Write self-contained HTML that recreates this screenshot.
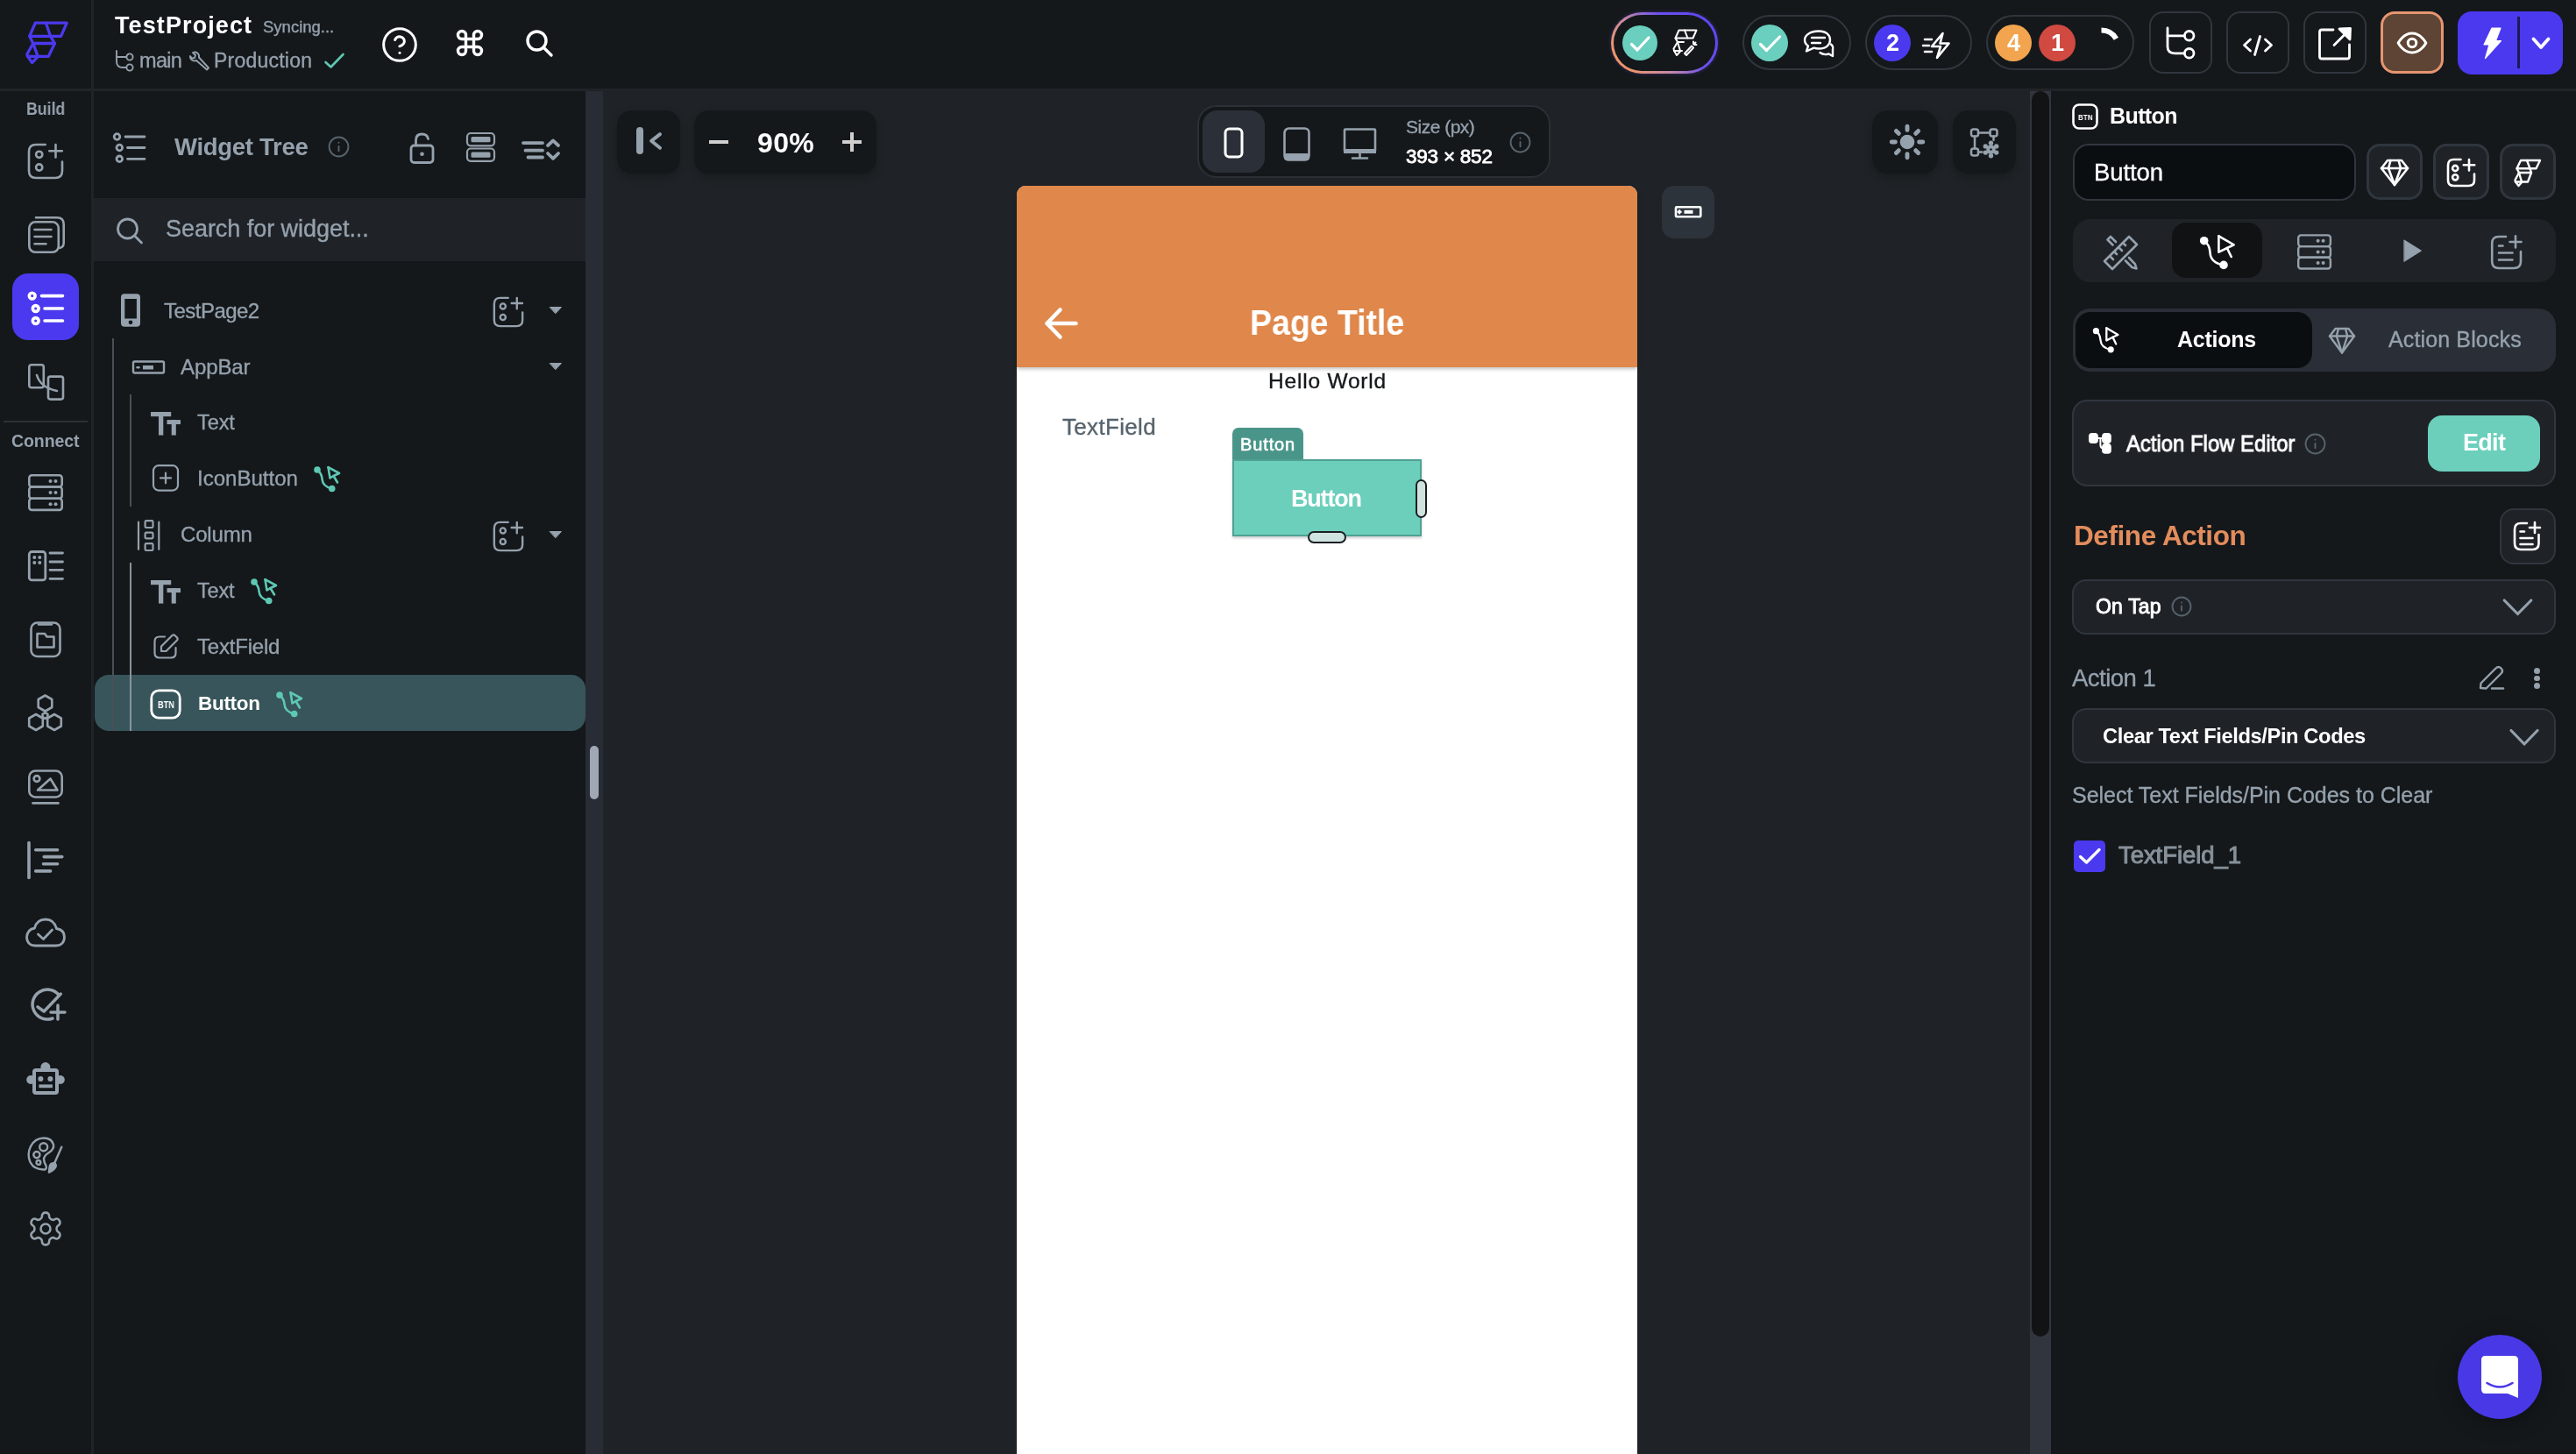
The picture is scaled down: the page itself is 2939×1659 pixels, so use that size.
<!DOCTYPE html>
<html><head><meta charset="utf-8"><title>FlutterFlow</title>
<style>
html,body{margin:0;padding:0}
body{width:2939px;height:1659px;overflow:hidden;position:relative;background:#14181b;font-family:"Liberation Sans",sans-serif}
.a{position:absolute}
.t{position:absolute;white-space:nowrap;line-height:1;will-change:transform}
svg.a{overflow:visible}
</style></head><body>
<div class="a" style="left:104px;top:0px;width:3px;height:1659px;background:#202428;"></div>
<div class="a" style="left:0px;top:101px;width:2939px;height:3px;background:#202428;"></div>
<div class="a" style="left:668px;top:104px;width:20px;height:1555px;background:#282c35;"></div>
<div class="a" style="left:673px;top:851px;width:10px;height:61px;background:#a0a8b5;border-radius:5px;"></div>
<div class="a" style="left:688px;top:104px;width:1628px;height:1555px;background:#1f2327;"></div>
<div class="a" style="left:2316px;top:104px;width:24px;height:1555px;background:#30353e;"></div>
<div class="a" style="left:2318px;top:104px;width:20px;height:1421px;background:#121315;border-radius:10px;"></div>
<svg class="a" style="left:25px;top:20px;" width="60" height="60" viewBox="0 0 60 60" fill="none" stroke="#4b39ef" stroke-width="3.3" stroke-linecap="round" stroke-linejoin="round"><path d="M15.3 6.2H51.2L44.6 21.3H8.7Z"/><path d="M27.4 6.2L32.6 21.3"/><path d="M8.7 21.3L12.8 29.5H37.4L32.6 21.3"/><path d="M12.8 29.5L5.8 42L6.6 44.4H30.3L37.4 29.5"/><path d="M12.8 29.5L18.2 44.4"/><path d="M6.6 44.4L11.6 51.6L18.4 44.4"/></svg>
<div class="t" style="left:131.00px;top:15.94px;font-size:27px;color:#ffffff;font-weight:700;letter-spacing:1.100px;">TestProject</div>
<div class="t" style="left:300.00px;top:22.34px;font-size:18.5px;color:#95a1ac;letter-spacing:0.000px;-webkit-text-stroke:0.35px #95a1ac;">Syncing...</div>
<svg class="a" style="left:130px;top:56px;" width="25" height="26" viewBox="0 0 25 26" fill="none" stroke="#95a1ac" stroke-width="1.9" stroke-linecap="round" stroke-linejoin="round"><path d="M3 2V14Q3 21 10 21H14"/><path d="M3 9H14"/><circle cx="18" cy="9" r="3.6"/><circle cx="18" cy="21" r="3.6"/></svg>
<div class="t" style="left:159.00px;top:57.91px;font-size:23.5px;color:#95a1ac;letter-spacing:-0.667px;-webkit-text-stroke:0.35px #95a1ac;">main</div>
<svg class="a" style="left:215px;top:57px;" width="25" height="24" viewBox="0 0 25 24" fill="none" stroke="#95a1ac" stroke-width="1.9" stroke-linecap="round" stroke-linejoin="round"><path d="M9 12L21 22.5L23 20.5L12 8.5"/><path d="M12 8.5A5 5 0 0 0 5 3L8 6L7 9L4 9.5L2 7A5 5 0 0 0 9 12"/></svg>
<div class="t" style="left:244.00px;top:58.33px;font-size:23px;color:#95a1ac;letter-spacing:0.222px;-webkit-text-stroke:0.35px #95a1ac;">Production</div>
<svg class="a" style="left:369px;top:59px;" width="25" height="21" viewBox="0 0 25 21" fill="none" stroke="#5ec8b3" stroke-width="2.6" stroke-linecap="round" stroke-linejoin="round"><path d="M2.5 12L8.5 17.5L22.5 3"/></svg>
<svg class="a" style="left:433.50px;top:28.50px;" width="44" height="44" viewBox="0 0 24 24" fill="none" stroke="#ffffff" stroke-width="1.636" stroke-linecap="round" stroke-linejoin="round"><circle cx="12" cy="12" r="10"/><path d="M9.09 9a3 3 0 0 1 5.83 1c0 2-3 3-3 3"/><path d="M12 17h.01"/></svg>
<svg class="a" style="left:517.50px;top:31.00px;" width="36" height="36" viewBox="0 0 24 24" fill="none" stroke="#ffffff" stroke-width="2.267" stroke-linecap="round" stroke-linejoin="round"><path d="M15 6v12a3 3 0 1 0 3-3H6a3 3 0 1 0 3 3V6a3 3 0 1 0-3 3h12a3 3 0 1 0-3-3"/></svg>
<svg class="a" style="left:597px;top:31px;" width="37" height="36" viewBox="0 0 37 36" fill="none" stroke="#ffffff" stroke-width="3.4" stroke-linecap="round" stroke-linejoin="round"><circle cx="15.5" cy="15.5" r="10.5"/><path d="M23 23L32 32"/></svg>
<div class="t" style="left:29.50px;top:115.49px;font-size:19.5px;color:#95a1ac;font-weight:700;transform:scaleX(0.9081632653061225);transform-origin:0 0;">Build</div>
<svg class="a" style="left:32px;top:164px;" width="40" height="40" viewBox="0 0 40 40" fill="none" stroke="#95a1ac" stroke-width="2.6" stroke-linecap="round" stroke-linejoin="round"><path d="M19.7 1H9Q1 1 1 9V31Q1 39 9 39H31Q39 39 39 31V20.5"/><path d="M31.5 1V15.5M24.3 8.2H38.8"/><circle cx="12.7" cy="12.3" r="3.6"/><circle cx="12.7" cy="27" r="3.6"/></svg>
<svg class="a" style="left:32px;top:247px;" width="42" height="42" viewBox="0 0 42 42" fill="none" stroke="#95a1ac" stroke-width="2.6" stroke-linecap="round" stroke-linejoin="round"><rect x="1.3" y="6.3" width="33.5" height="34.5" rx="7"/><path d="M9 1.3H33Q40.7 1.3 40.7 9V30Q40.7 35 36 36"/><path d="M7.5 15H26.5M7.5 23H26.5M7.5 31.3H20.5"/></svg>
<div class="a" style="left:14px;top:312px;width:76px;height:76px;background:#4b39ef;border-radius:18px;"></div>
<svg class="a" style="left:28px;top:328px;" width="48" height="44" viewBox="0 0 48 44" fill="none" stroke="#ffffff" stroke-width="3.6" stroke-linecap="round" stroke-linejoin="round"><circle cx="8.7" cy="9.6" r="3.4"/><circle cx="12.7" cy="24" r="3.4"/><circle cx="12.7" cy="38" r="3.4"/><path d="M19.5 9.6H43.5M23 24H43.5M23 38H43.5"/></svg>
<svg class="a" style="left:32px;top:415px;" width="42" height="42" viewBox="0 0 42 42" fill="none" stroke="#95a1ac" stroke-width="2.6" stroke-linecap="round" stroke-linejoin="round"><rect x="1.3" y="1.3" width="16.5" height="26" rx="2.5"/><rect x="23" y="14.6" width="17" height="26" rx="2.5"/><path d="M10 13Q14 27 33 31"/></svg>
<div class="a" style="left:4px;top:480px;width:96px;height:2px;background:#2b3036;"></div>
<div class="t" style="left:13.00px;top:493.69px;font-size:19.5px;color:#95a1ac;font-weight:700;letter-spacing:-0.067px;">Connect</div>
<svg class="a" style="left:32px;top:541px;" width="40" height="42" viewBox="0 0 40 42" fill="none" stroke="#95a1ac" stroke-width="2.6" stroke-linecap="round" stroke-linejoin="round"><rect x="1.3" y="1.3" width="37.4" height="13.2" rx="3"/><rect x="1.3" y="14.5" width="37.4" height="13.2" rx="3"/><rect x="1.3" y="27.7" width="37.4" height="13.2" rx="3"/><g fill="#95a1ac" stroke="none"><circle cx="25.5" cy="8" r="2"/><circle cx="31.5" cy="8" r="2"/><circle cx="25.5" cy="21" r="2"/><circle cx="31.5" cy="21" r="2"/><circle cx="25.5" cy="34.3" r="2"/><circle cx="31.5" cy="34.3" r="2"/></g></svg>
<svg class="a" style="left:32px;top:628px;" width="42" height="36" viewBox="0 0 42 36" fill="none" stroke="#95a1ac" stroke-width="2.8" stroke-linecap="round" stroke-linejoin="round"><rect x="1.3" y="1.5" width="18.5" height="32.4" rx="3"/><path d="M25 3H39.5M25 13H39.5M25 22.3H39.5M25 32.3H39.5"/><g fill="#95a1ac" stroke="none"><circle cx="7.3" cy="8" r="2"/><circle cx="13.3" cy="8" r="2"/><circle cx="7.3" cy="14" r="2"/><circle cx="13.3" cy="14" r="2"/></g></svg>
<svg class="a" style="left:34px;top:709px;" width="36" height="42" viewBox="0 0 36 42" fill="none" stroke="#95a1ac" stroke-width="2.6" stroke-linecap="round" stroke-linejoin="round"><rect x="1.5" y="1.5" width="33" height="38.5" rx="7"/><path d="M10 3.5H25"/><path d="M8.5 14H17L19.5 17.5H27.5V29.5H8.5Z"/></svg>
<svg class="a" style="left:30px;top:792px;" width="44" height="44" viewBox="0 0 44 44" fill="none" stroke="#95a1ac" stroke-width="2.6" stroke-linecap="round" stroke-linejoin="round"><path d="M21.50 19.50L13.71 15.00L13.71 6.00L21.50 1.50L29.29 6.00L29.29 15.00Z"/><path d="M11.00 41.00L3.21 36.50L3.21 27.50L11.00 23.00L18.79 27.50L18.79 36.50Z"/><path d="M32.00 41.00L24.21 36.50L24.21 27.50L32.00 23.00L39.79 27.50L39.79 36.50Z"/><path d="M21.50 27.90L18.56 26.20L18.56 22.80L21.50 21.10L24.44 22.80L24.44 26.20Z"/></svg>
<svg class="a" style="left:30px;top:877px;" width="44" height="43" viewBox="0 0 44 43" fill="none" stroke="#95a1ac" stroke-width="2.6" stroke-linecap="round" stroke-linejoin="round"><rect x="3.3" y="2.5" width="37.4" height="30" rx="7"/><circle cx="12" cy="11.5" r="3.4"/><path d="M13 24.5L27.5 11.5L35.5 24.5Z"/><path d="M7.5 39.4H36.5"/></svg>
<svg class="a" style="left:30px;top:959px;" width="44" height="45" viewBox="0 0 44 45" fill="none" stroke="#95a1ac" stroke-width="3.6" stroke-linecap="round" stroke-linejoin="round"><path d="M3 2.5V42.5"/><path d="M10.7 10.7H35.6M20.2 18.6H40.8M19.5 26.7H35.6M10.7 34.9H27.6"/></svg>
<svg class="a" style="left:28px;top:1046px;" width="48" height="36" viewBox="0 0 48 36" fill="none" stroke="#95a1ac" stroke-width="2.8" stroke-linecap="round" stroke-linejoin="round"><path d="M13 33H35Q45 33 45.5 23.5Q45.5 15 36.5 13.5Q33.5 3 24 3Q14 3 11.5 13Q3 14.5 2.5 23.5Q3 33 13 33Z"/><path d="M15.5 20L21.5 25.5L31.5 15"/></svg>
<svg class="a" style="left:30px;top:1127px;" width="46" height="42" viewBox="0 0 46 42" fill="none" stroke="#95a1ac" stroke-width="3.5" stroke-linecap="round" stroke-linejoin="round"><path d="M37 8A17 17 0 1 0 30 35"/><path d="M13 21.8L20.2 27L39.3 7"/><path d="M36 20V36M28 28H44"/></svg>
<svg class="a" style="left:30px;top:1210px;" width="44" height="42" viewBox="0 0 44 42" fill="none" stroke="#95a1ac" stroke-width="2" stroke-linecap="round" stroke-linejoin="round"><g fill="#95a1ac" stroke="none"><circle cx="21.9" cy="7.6" r="5.5"/><circle cx="5.2" cy="22" r="5"/><circle cx="38.8" cy="22" r="5"/><rect x="7" y="9" width="30" height="30" rx="4"/></g><rect x="11" y="13" width="22" height="22" fill="#14181b" stroke="none"/><g fill="#95a1ac" stroke="none"><circle cx="16.4" cy="21" r="3"/><circle cx="27.4" cy="21" r="3"/><rect x="14.4" y="27.4" width="15.5" height="3.8"/></g></svg>
<svg class="a" style="left:30px;top:1296px;" width="46" height="44" viewBox="0 0 46 44" fill="none" stroke="#95a1ac" stroke-width="2.4" stroke-linecap="round" stroke-linejoin="round"><path d="M21 38.5Q9 39 4.5 30Q0.5 21 5 12Q10 2.5 20 2.5Q29 2.5 31 10Q32 15 26 19Q20 22.5 20 27Q20.5 31 22.5 34Q23.5 38 21 38.5Z"/><circle cx="19.7" cy="12.7" r="4.5"/><circle cx="11.9" cy="21.6" r="3.6"/><circle cx="13.9" cy="30.4" r="2.4"/><path d="M40.3 12.7L32 31.5"/><path d="M31.9 31Q27 31 26.5 36L25.9 41.6Q31 40 33.5 35.5Q34.5 32.5 31.9 31Z" fill="#95a1ac"/></svg>
<svg class="a" style="left:30.00px;top:1379.50px;" width="44" height="44" viewBox="0 0 24 24" fill="none" stroke="#95a1ac" stroke-width="1.418" stroke-linecap="round" stroke-linejoin="round"><path d="M12.22 2h-.44a2 2 0 0 0-2 2v.18a2 2 0 0 1-1 1.73l-.43.25a2 2 0 0 1-2 0l-.15-.08a2 2 0 0 0-2.73.73l-.22.38a2 2 0 0 0 .73 2.73l.15.1a2 2 0 0 1 1 1.72v.51a2 2 0 0 1-1 1.74l-.15.09a2 2 0 0 0-.73 2.73l.22.38a2 2 0 0 0 2.73.73l.15-.08a2 2 0 0 1 2 0l.43.25a2 2 0 0 1 1 1.73V20a2 2 0 0 0 2 2h.44a2 2 0 0 0 2-2v-.18a2 2 0 0 1 1-1.73l.43-.25a2 2 0 0 1 2 0l.15.08a2 2 0 0 0 2.73-.73l.22-.39a2 2 0 0 0-.73-2.73l-.15-.08a2 2 0 0 1-1-1.74v-.5a2 2 0 0 1 1-1.74l.15-.09a2 2 0 0 0 .73-2.73l-.22-.38a2 2 0 0 0-2.73-.73l-.15.08a2 2 0 0 1-2 0l-.43-.25a2 2 0 0 1-1-1.73V4a2 2 0 0 0-2-2z"/><circle cx="12" cy="12" r="3"/></svg>
<svg class="a" style="left:128px;top:150px;" width="40" height="40" viewBox="0 0 40 40" fill="none" stroke="#95a1ac" stroke-width="2.8" stroke-linecap="round" stroke-linejoin="round"><circle cx="5.5" cy="6" r="3.3"/><circle cx="8.3" cy="18.5" r="3.3"/><circle cx="8.3" cy="31.3" r="3.3"/><path d="M15 6H37M17.5 18.5H37M17.5 31.3H37"/></svg>
<div class="t" style="left:198.50px;top:154.02px;font-size:27.5px;color:#95a1ac;font-weight:700;letter-spacing:-0.290px;">Widget Tree</div>
<svg class="a" style="left:373.90px;top:155.30px;" width="25" height="25" viewBox="0 0 24 24" fill="none" stroke="#57636c" stroke-width="1.824" stroke-linecap="round" stroke-linejoin="round"><circle cx="12" cy="12" r="10.5"/><path d="M12 16.5v-5"/><path d="M12 7.5h.01"/></svg>
<svg class="a" style="left:466px;top:150px;" width="31" height="38" viewBox="0 0 31 38" fill="none" stroke="#95a1ac" stroke-width="2.8" stroke-linecap="round" stroke-linejoin="round"><rect x="3" y="16" width="25" height="19.5" rx="3.5"/><path d="M8.5 16V10Q8.5 3 15.5 3Q21.5 3 22.5 8.5"/><circle cx="15.5" cy="25.7" r="2.3" fill="#95a1ac" stroke="none"/></svg>
<svg class="a" style="left:530px;top:149px;" width="37" height="37" viewBox="0 0 37 37" fill="none" stroke="#95a1ac" stroke-width="2.2" stroke-linecap="round" stroke-linejoin="round"><rect x="3" y="3" width="31" height="14.3" rx="4"/><rect x="3" y="20.5" width="31" height="14.3" rx="4"/><g fill="#95a1ac" stroke="none"><rect x="7.5" y="7" width="22" height="6.3" rx="1.5"/><rect x="7.5" y="24.5" width="22" height="6.3" rx="1.5"/></g></svg>
<svg class="a" style="left:593px;top:155px;" width="47" height="31" viewBox="0 0 47 31" fill="none" stroke="#95a1ac" stroke-width="3.8" stroke-linecap="round" stroke-linejoin="round"><path d="M4 8.1H26M6.5 16.7H26M9.5 24.5H26"/><path d="M32 11L38 5.4L44 11M32 20L38 25.8L44 20"/></svg>
<div class="a" style="left:107px;top:226px;width:561px;height:72px;background:#1f2328;"></div>
<svg class="a" style="left:130px;top:246px;" width="36" height="34" viewBox="0 0 36 34" fill="none" stroke="#95a1ac" stroke-width="2.8" stroke-linecap="round" stroke-linejoin="round"><circle cx="15.5" cy="15" r="11"/><path d="M23.5 23L31.5 31"/></svg>
<div class="t" style="left:188.50px;top:248.34px;font-size:27px;color:#95a1ac;letter-spacing:-0.042px;-webkit-text-stroke:0.35px #95a1ac;">Search for widget...</div>
<div class="a" style="left:108px;top:770px;width:560px;height:64px;background:#37555a;border-radius:16px;"></div>
<div class="a" style="left:128px;top:386px;width:2px;height:448px;background:#4a5058;"></div>
<div class="a" style="left:148px;top:450px;width:2px;height:128px;background:#4a5058;"></div>
<div class="a" style="left:148px;top:642px;width:2px;height:192px;background:#8a939b;"></div>
<svg class="a" style="left:137px;top:334px;" width="24" height="40" viewBox="0 0 24 40" fill="none" stroke="#95a1ac" stroke-width="1" stroke-linecap="round" stroke-linejoin="round"><rect x="1" y="1.3" width="22" height="37.4" rx="4" fill="#95a1ac" stroke="none"/><rect x="5.3" y="7" width="13.6" height="22.5" fill="#14181b" stroke="none"/><circle cx="12" cy="33.8" r="2.4" fill="#14181b" stroke="none"/></svg>
<div class="t" style="left:187.00px;top:342.68px;font-size:24px;color:#95a1ac;letter-spacing:-0.525px;-webkit-text-stroke:0.35px #95a1ac;">TestPage2</div>
<svg class="a" style="left:563px;top:338.5px;" width="34" height="34.0" viewBox="0 0 40 40" fill="none" stroke="#95a1ac" stroke-width="2.823529411764706" stroke-linecap="round" stroke-linejoin="round"><path d="M19.7 1H9Q1 1 1 9V31Q1 39 9 39H31Q39 39 39 31V20.5"/><path d="M31.5 1V15.5M24.3 8.2H38.8"/><circle cx="12.7" cy="12.3" r="3.6"/><circle cx="12.7" cy="27" r="3.6"/></svg>
<svg class="a" style="left:626px;top:349px;" width="16" height="10" viewBox="0 0 16 10" fill="none" stroke="#95a1ac" stroke-width="1" stroke-linecap="round" stroke-linejoin="round"><path d="M1.5 1.5H14.5L8 8.5Z" fill="#95a1ac"/></svg>
<svg class="a" style="left:150px;top:410px;" width="40" height="18" viewBox="0 0 40 18" fill="none" stroke="#95a1ac" stroke-width="2.4" stroke-linecap="round" stroke-linejoin="round"><rect x="2" y="2.5" width="35" height="13" rx="1.5"/><rect x="13" y="7" width="12" height="4.5" fill="#95a1ac" stroke="none"/><path d="M6.5 9.3H8.5"/></svg>
<div class="t" style="left:206.00px;top:406.88px;font-size:24px;color:#95a1ac;letter-spacing:-0.100px;-webkit-text-stroke:0.35px #95a1ac;">AppBar</div>
<svg class="a" style="left:626px;top:413px;" width="16" height="10" viewBox="0 0 16 10" fill="none" stroke="#95a1ac" stroke-width="1" stroke-linecap="round" stroke-linejoin="round"><path d="M1.5 1.5H14.5L8 8.5Z" fill="#95a1ac"/></svg>
<svg class="a" style="left:172px;top:470.2px;" width="36" height="28.0" viewBox="0 0 36 28" fill="none" stroke="none" stroke-width="0" stroke-linecap="round" stroke-linejoin="round"><g fill="#95a1ac"><rect x="0" y="0" width="23.2" height="5.2"/><rect x="9" y="0" width="5.3" height="26.6"/><rect x="18.5" y="9.1" width="15.5" height="5"/><rect x="23.7" y="9.1" width="5.1" height="17.5"/></g></svg>
<div class="t" style="left:225.00px;top:471.31px;font-size:23.5px;color:#95a1ac;letter-spacing:-0.067px;-webkit-text-stroke:0.35px #95a1ac;">Text</div>
<svg class="a" style="left:173px;top:529px;" width="32" height="33" viewBox="0 0 32 33" fill="none" stroke="#95a1ac" stroke-width="2.2" stroke-linecap="round" stroke-linejoin="round"><rect x="2" y="2.2" width="28" height="28.4" rx="6"/><path d="M16 10.5V22.3M10 16.4H22"/></svg>
<div class="t" style="left:225.00px;top:534.48px;font-size:24px;color:#95a1ac;letter-spacing:0.022px;-webkit-text-stroke:0.35px #95a1ac;">IconButton</div>
<svg class="a" style="left:358px;top:532px;" width="30" height="30" viewBox="0 0 30 30" fill="none" stroke="#5ec8b3" stroke-width="2.6" stroke-linecap="round" stroke-linejoin="round"><circle cx="4" cy="4" r="3.8" fill="#5ec8b3" stroke="none"/><circle cx="20.7" cy="25.5" r="3.8" fill="#5ec8b3" stroke="none"/><path d="M4 4Q9 8 9.5 14.5Q10 23 20.7 25.5"/><path d="M16.5 1.2L29 8L22.5 11L27 18.5"/><path d="M16.5 1.2L18.5 13.5L22.5 11"/></svg>
<svg class="a" style="left:154px;top:592px;" width="32" height="38" viewBox="0 0 32 38" fill="none" stroke="#95a1ac" stroke-width="2.2" stroke-linecap="round" stroke-linejoin="round"><path d="M4 3.7V34.8M27.3 3.7V34.8"/><rect x="11.6" y="2.2" width="8.9" height="7.8" rx="1.3"/><rect x="11.6" y="15.7" width="8.9" height="6.6" rx="1.3"/><rect x="11.6" y="28.2" width="8.9" height="7.8" rx="1.3"/></svg>
<div class="t" style="left:205.80px;top:598.28px;font-size:24px;color:#95a1ac;letter-spacing:-0.160px;-webkit-text-stroke:0.35px #95a1ac;">Column</div>
<svg class="a" style="left:563px;top:594.6px;" width="34" height="34.0" viewBox="0 0 40 40" fill="none" stroke="#95a1ac" stroke-width="2.823529411764706" stroke-linecap="round" stroke-linejoin="round"><path d="M19.7 1H9Q1 1 1 9V31Q1 39 9 39H31Q39 39 39 31V20.5"/><path d="M31.5 1V15.5M24.3 8.2H38.8"/><circle cx="12.7" cy="12.3" r="3.6"/><circle cx="12.7" cy="27" r="3.6"/></svg>
<svg class="a" style="left:626px;top:605px;" width="16" height="10" viewBox="0 0 16 10" fill="none" stroke="#95a1ac" stroke-width="1" stroke-linecap="round" stroke-linejoin="round"><path d="M1.5 1.5H14.5L8 8.5Z" fill="#95a1ac"/></svg>
<svg class="a" style="left:172px;top:662px;" width="36" height="28" viewBox="0 0 36 28" fill="none" stroke="none" stroke-width="0" stroke-linecap="round" stroke-linejoin="round"><g fill="#95a1ac"><rect x="0" y="0" width="23.2" height="5.2"/><rect x="9" y="0" width="5.3" height="26.6"/><rect x="18.5" y="9.1" width="15.5" height="5"/><rect x="23.7" y="9.1" width="5.1" height="17.5"/></g></svg>
<div class="t" style="left:225.00px;top:662.91px;font-size:23.5px;color:#95a1ac;letter-spacing:-0.200px;-webkit-text-stroke:0.35px #95a1ac;">Text</div>
<svg class="a" style="left:286px;top:660px;" width="30" height="30" viewBox="0 0 30 30" fill="none" stroke="#5ec8b3" stroke-width="2.6" stroke-linecap="round" stroke-linejoin="round"><circle cx="4" cy="4" r="3.8" fill="#5ec8b3" stroke="none"/><circle cx="20.7" cy="25.5" r="3.8" fill="#5ec8b3" stroke="none"/><path d="M4 4Q9 8 9.5 14.5Q10 23 20.7 25.5"/><path d="M16.5 1.2L29 8L22.5 11L27 18.5"/><path d="M16.5 1.2L18.5 13.5L22.5 11"/></svg>
<svg class="a" style="left:174px;top:723px;" width="31" height="30" viewBox="0 0 31 30" fill="none" stroke="#95a1ac" stroke-width="2.2" stroke-linecap="round" stroke-linejoin="round"><path d="M14 3.5H8Q2.5 3.5 2.5 9V22Q2.5 27.5 8 27.5H21Q26.5 27.5 26.5 22V16"/><path d="M10 20V14.5L22.5 2Q24 0.7 25.5 2L28 4.5Q29.3 6 28 7.5L15.5 20Z"/></svg>
<div class="t" style="left:225.00px;top:726.28px;font-size:24px;color:#95a1ac;letter-spacing:-0.200px;-webkit-text-stroke:0.35px #95a1ac;">TextField</div>
<svg class="a" style="left:170px;top:785px;" width="38" height="37" viewBox="0 0 38 37" fill="none" stroke="#ffffff" stroke-width="2.8" stroke-linecap="round" stroke-linejoin="round"><rect x="2.8" y="2.8" width="32.4" height="31.4" rx="8.5"/></svg>
<div class="t" style="left:179.50px;top:799.19px;font-size:11px;color:#ffffff;font-weight:700;transform:scaleX(0.8347826086956517);transform-origin:0 0;">BTN</div>
<div class="t" style="left:225.50px;top:791.55px;font-size:22.5px;color:#ffffff;font-weight:700;letter-spacing:-0.300px;">Button</div>
<svg class="a" style="left:314.5px;top:788.5px;" width="30.0" height="30.0" viewBox="0 0 30 30" fill="none" stroke="#5ec8b3" stroke-width="2.6" stroke-linecap="round" stroke-linejoin="round"><circle cx="4" cy="4" r="3.8" fill="#5ec8b3" stroke="none"/><circle cx="20.7" cy="25.5" r="3.8" fill="#5ec8b3" stroke="none"/><path d="M4 4Q9 8 9.5 14.5Q10 23 20.7 25.5"/><path d="M16.5 1.2L29 8L22.5 11L27 18.5"/><path d="M16.5 1.2L18.5 13.5L22.5 11"/></svg>
<div class="a" style="left:704px;top:126px;width:72px;height:72px;background:#15181b;border-radius:17px;box-shadow:0 4px 10px rgba(0,0,0,.25);"></div>
<div class="a" style="left:726px;top:144.7px;width:8.399999999999977px;height:31.80000000000001px;background:#95a1ac;border-radius:4px;"></div>
<svg class="a" style="left:738px;top:148px;" width="22" height="26" viewBox="0 0 22 26" fill="none" stroke="#95a1ac" stroke-width="4" stroke-linecap="round" stroke-linejoin="round"><path d="M15 5.2L5.1 12.8L15 20.7"/></svg>
<div class="a" style="left:792px;top:126px;width:208px;height:72px;background:#15181b;border-radius:17px;box-shadow:0 4px 10px rgba(0,0,0,.25);"></div>
<div class="a" style="left:809px;top:160.2px;width:22px;height:4.100000000000023px;background:#d0d0d0;"></div>
<div class="t" style="left:863.60px;top:147.11px;font-size:32px;color:#ffffff;font-weight:700;letter-spacing:0.350px;">90%</div>
<div class="a" style="left:961px;top:160.1px;width:22px;height:4.099999999999994px;background:#d0d0d0;"></div>
<div class="a" style="left:970px;top:151px;width:4.100000000000023px;height:22.30000000000001px;background:#d0d0d0;"></div>
<div class="a" style="left:1366px;top:120px;width:403px;height:83px;background:#15181b;border-radius:22px;border:2.5px solid #2b3036;box-sizing:border-box;"></div>
<div class="a" style="left:1371.5px;top:126px;width:71.5px;height:71px;background:#2b3038;border-radius:17px;"></div>
<svg class="a" style="left:1395px;top:144px;" width="25" height="38" viewBox="0 0 25 38" fill="none" stroke="#ffffff" stroke-width="3" stroke-linecap="round" stroke-linejoin="round"><rect x="3" y="3" width="19" height="32" rx="4.5"/></svg>
<svg class="a" style="left:1463px;top:144px;" width="33" height="41" viewBox="0 0 33 41" fill="none" stroke="#95a1ac" stroke-width="2.6" stroke-linecap="round" stroke-linejoin="round"><rect x="2.5" y="2.5" width="28" height="36" rx="5"/><rect x="2" y="31" width="29" height="8" rx="3" fill="#95a1ac" stroke="none"/></svg>
<svg class="a" style="left:1531px;top:144px;" width="41" height="40" viewBox="0 0 41 40" fill="none" stroke="#95a1ac" stroke-width="2.6" stroke-linecap="round" stroke-linejoin="round"><rect x="3" y="3.5" width="35" height="25.5" rx="1"/><rect x="2" y="26" width="37" height="5" fill="#95a1ac" stroke="none"/><path d="M20.5 31V36M12 36.5H29"/></svg>
<div class="t" style="left:1604.00px;top:134.22px;font-size:21px;color:#95a1ac;letter-spacing:-0.500px;-webkit-text-stroke:0.35px #95a1ac;">Size (px)</div>
<div class="t" style="left:1604.40px;top:168.45px;font-size:22.5px;color:#ffffff;letter-spacing:-0.225px;-webkit-text-stroke:0.8px #ffffff;">393 × 852</div>
<svg class="a" style="left:1721.80px;top:149.50px;" width="25" height="25" viewBox="0 0 24 24" fill="none" stroke="#57636c" stroke-width="1.824" stroke-linecap="round" stroke-linejoin="round"><circle cx="12" cy="12" r="10.5"/><path d="M12 16.5v-5"/><path d="M12 7.5h.01"/></svg>
<div class="a" style="left:2136px;top:126px;width:75px;height:72px;background:#15181b;border-radius:18px;box-shadow:0 4px 10px rgba(0,0,0,.25);"></div>
<svg class="a" style="left:2146px;top:132px;" width="60" height="60" viewBox="0 0 60 60" fill="none" stroke="#95a1ac" stroke-width="4.9" stroke-linecap="round" stroke-linejoin="round"><circle cx="30" cy="30" r="8.3" fill="#95a1ac" stroke="none"/><path d="M30 12.2V16.4M30 43.6V47.8M12.2 30H16.4M43.6 30H47.8M17.4 17.4L20.3 20.3M39.7 39.7L42.6 42.6M17.4 42.6L20.3 39.7M39.7 20.3L42.6 17.4"/></svg>
<div class="a" style="left:2228px;top:126px;width:72px;height:72px;background:#15181b;border-radius:18px;box-shadow:0 4px 10px rgba(0,0,0,.25);"></div>
<svg class="a" style="left:2238px;top:136px;" width="52" height="52" viewBox="0 0 52 52" fill="none" stroke="#95a1ac" stroke-width="2.5" stroke-linecap="round" stroke-linejoin="round"><rect x="11" y="11.4" width="8" height="8" rx="2.5"/><rect x="32.5" y="11.4" width="8" height="8" rx="2.5"/><rect x="11" y="33.5" width="8" height="8" rx="2.5"/><path d="M19 15.4H32.5M15 19.4V33.5M36.5 19.4V23.8M19 37.5H23.4"/><g fill="#95a1ac" stroke="none"><circle cx="33.5" cy="34.5" r="5.3"/><circle cx="33.5" cy="27.3" r="2.7"/><circle cx="33.5" cy="41.7" r="2.7"/><circle cx="27.3" cy="30.9" r="2.7"/><circle cx="39.7" cy="30.9" r="2.7"/><circle cx="27.3" cy="38.1" r="2.7"/><circle cx="39.7" cy="38.1" r="2.7"/></g><circle cx="33.5" cy="34.5" r="1.3" fill="#15181b" stroke="none"/></svg>
<div class="a" style="left:1160px;top:212px;width:708px;height:1488px;background:#ffffff;border-radius:10px;"></div>
<div class="a" style="left:1160px;top:212px;width:708px;height:206.5px;background:#e0874b;border-radius:10px 10px 0 0;box-shadow:0 2px 4px rgba(0,0,0,.25);"></div>
<svg class="a" style="left:1188px;top:346px;" width="46" height="46" viewBox="0 0 46 46" fill="none" stroke="#ffffff" stroke-width="4.6" stroke-linecap="round" stroke-linejoin="round"><path d="M21.5 7.5L6.5 23L21.5 38.5M6.5 23H39.5"/></svg>
<div class="t" style="left:1426.00px;top:348.14px;font-size:40px;color:#ffffff;font-weight:700;transform:scaleX(0.9361702127659575);transform-origin:0 0;">Page Title</div>
<div class="t" style="left:1447.00px;top:422.86px;font-size:24.5px;color:#14181b;letter-spacing:0.800px;-webkit-text-stroke:0.35px #14181b;">Hello World</div>
<div class="t" style="left:1212.00px;top:473.99px;font-size:26px;color:#57636c;letter-spacing:0.325px;-webkit-text-stroke:0.35px #57636c;">TextField</div>
<div class="a" style="left:1406px;top:487.5px;width:80.5px;height:38.5px;background:#4a9589;border-radius:7px 7px 0 0;"></div>
<div class="t" style="left:1415.30px;top:497.07px;font-size:20px;color:#ffffff;letter-spacing:0.880px;-webkit-text-stroke:0.6px #ffffff;">Button</div>
<div class="a" style="left:1406px;top:524px;width:216px;height:88px;background:#6bcfbc;border:2.5px solid #4fa193;box-sizing:border-box;box-shadow:0 2px 3px rgba(0,0,0,.2);"></div>
<div class="t" style="left:1473.00px;top:556.14px;font-size:27px;color:#ffffff;font-weight:700;letter-spacing:-1.200px;">Button</div>
<div class="a" style="left:1614.6px;top:546.5px;width:13.900000000000091px;height:44.0px;background:#d0e4df;border-radius:7px;border:2px solid #1b1f22;box-sizing:border-box;"></div>
<div class="a" style="left:1492px;top:605.6px;width:44px;height:14.399999999999977px;background:#d0e4df;border-radius:7px;border:2px solid #1b1f22;box-sizing:border-box;"></div>
<div class="a" style="left:1896px;top:212px;width:60px;height:60px;background:#2d333b;border-radius:14px;"></div>
<svg class="a" style="left:1908px;top:232px;" width="36" height="22" viewBox="0 0 36 22" fill="none" stroke="#ffffff" stroke-width="2.6" stroke-linecap="round" stroke-linejoin="round"><rect x="4" y="4.3" width="28.3" height="11" rx="1"/><rect x="13.5" y="7.8" width="10" height="4" fill="#fff" stroke="none"/><path d="M6.7 9.8H9.5M8.1 8.4V11.2"/></svg>
<svg class="a" style="left:2363px;top:117px;" width="32" height="32" viewBox="0 0 32 32" fill="none" stroke="#ffffff" stroke-width="2.6" stroke-linecap="round" stroke-linejoin="round"><rect x="2.5" y="2.5" width="27" height="27" rx="6.5"/></svg>
<div class="t" style="left:2370.50px;top:129.46px;font-size:9.5px;color:#ffffff;font-weight:700;transform:scaleX(0.85);transform-origin:0 0;">BTN</div>
<div class="t" style="left:2407.00px;top:119.84px;font-size:25px;color:#ffffff;font-weight:700;letter-spacing:-0.600px;">Button</div>
<div class="a" style="left:2364.5px;top:164px;width:323.5px;height:65px;background:#0b0e11;border-radius:18px;border:2.5px solid #30363e;box-sizing:border-box;"></div>
<div class="t" style="left:2389.00px;top:183.12px;font-size:27.5px;color:#ffffff;letter-spacing:-0.100px;-webkit-text-stroke:0.35px #ffffff;">Button</div>
<div class="a" style="left:2700px;top:164px;width:64px;height:64px;background:#1f2328;border-radius:15px;border:3px solid #30363e;box-sizing:border-box;"></div>
<div class="a" style="left:2776px;top:164px;width:64px;height:64px;background:#1f2328;border-radius:15px;border:3px solid #30363e;box-sizing:border-box;"></div>
<div class="a" style="left:2852px;top:164px;width:64px;height:64px;background:#1f2328;border-radius:15px;border:3px solid #30363e;box-sizing:border-box;"></div>
<svg class="a" style="left:2714px;top:180px;" width="36" height="34" viewBox="0 0 36 34" fill="none" stroke="#ffffff" stroke-width="2.6" stroke-linecap="round" stroke-linejoin="round"><path d="M10 3H26L33 12L18 31L3 12Z"/><path d="M3 12H33"/><path d="M13.5 3L11 12L18 31L25 12L22.5 3"/></svg>
<svg class="a" style="left:2791px;top:180px;" width="34" height="34" viewBox="0 0 34 34" fill="none" stroke="#ffffff" stroke-width="2.6" stroke-linecap="round" stroke-linejoin="round"><path d="M16.5 2H8.5Q2 2 2 8.5V25.5Q2 32 8.5 32H25.5Q32 32 32 25.5V18.5"/><path d="M26 2V14.5M19.8 8.2H32.2"/><circle cx="10.2" cy="12" r="3.1"/><circle cx="10.2" cy="22.3" r="3.1"/></svg>
<svg class="a" style="left:2866px;top:180px;" width="36" height="34" viewBox="0 0 36 34" fill="none" stroke="#ffffff" stroke-width="2.4" stroke-linecap="round" stroke-linejoin="round"><path d="M10 3H32L27.5 12.3H5.5Z"/><path d="M17 3L20.5 12.3"/><path d="M5.5 12.3L8 17H22L20.5 12.3"/><path d="M8 17L3.5 25.5L4 27.5H18L22 17"/><path d="M8 17L11 27.5"/><path d="M4 27.5L7.5 32L11.5 27.5"/></svg>
<div class="a" style="left:2364.5px;top:250px;width:551.0999999999999px;height:71.60000000000002px;background:#1f2328;border-radius:20px;"></div>
<div class="a" style="left:2478.4px;top:253.8px;width:102.29999999999973px;height:63.69999999999999px;background:#111214;border-radius:16px;"></div>
<svg class="a" style="left:2398px;top:266px;" width="43" height="43" viewBox="0 0 43 43" fill="none" stroke="#95a1ac" stroke-width="2.6" stroke-linecap="round" stroke-linejoin="round"><path d="M12.5 13.5L6.5 7.5L10 4L16 10"/><path d="M3 33L31 5L40 14L12 42Z" transform="translate(0,-1)"/><path d="M9.5 26.5L13 30M14.5 21.5L17 24M19.5 16.5L23 20M24.5 11.5L27 14"/><path d="M27 31.5L34.5 39L39.5 40.5L38 35.5L31 28"/></svg>
<svg class="a" style="left:2508px;top:267px;" width="43" height="42" viewBox="0 0 43 42" fill="none" stroke="#ffffff" stroke-width="2.6" stroke-linecap="round" stroke-linejoin="round"><circle cx="6.7" cy="7.7" r="4.8" fill="#fff" stroke="none"/><circle cx="29" cy="35.4" r="4.8" fill="#fff" stroke="none"/><path d="M6.7 7.7Q13 12 13.5 21Q14 33 29 35.4"/><path d="M23.4 2.3L40.6 12.4L32.9 16L37.7 26"/><path d="M23.4 2.3L23.4 20.7L32.9 16"/></svg>
<svg class="a" style="left:2620px;top:266px;" width="41" height="43" viewBox="0 0 41 43" fill="none" stroke="#95a1ac" stroke-width="2.4" stroke-linecap="round" stroke-linejoin="round"><rect x="2.2" y="2.4" width="36.7" height="12.7" rx="3"/><rect x="2.2" y="15.1" width="36.7" height="12.7" rx="3"/><rect x="2.2" y="27.8" width="36.7" height="12.7" rx="3"/><g fill="#95a1ac" stroke="none"><circle cx="24.6" cy="8.7" r="2"/><circle cx="30.6" cy="8.7" r="2"/><circle cx="24.6" cy="21.4" r="2"/><circle cx="30.6" cy="21.4" r="2"/><circle cx="24.6" cy="34.1" r="2"/><circle cx="30.6" cy="34.1" r="2"/></g></svg>
<svg class="a" style="left:2740px;top:272px;" width="26" height="28" viewBox="0 0 26 28" fill="none" stroke="#95a1ac" stroke-width="1" stroke-linecap="round" stroke-linejoin="round"><path d="M3.2 2.1L22.5 14.1L3.2 26.2Z" fill="#95a1ac"/></svg>
<svg class="a" style="left:2841px;top:267px;" width="40" height="42" viewBox="0 0 40 42" fill="none" stroke="#95a1ac" stroke-width="2.6" stroke-linecap="round" stroke-linejoin="round"><path d="M18 3H10Q2.2 3 2.2 10.5V31.5Q2.2 39 10 39H27Q35 39 35 31.5V20"/><path d="M29 2.3V15.5M22.5 9H35.5"/><path d="M10 13.5H14.5M10 21.5H25.5M10 29.5H25.5"/></svg>
<div class="a" style="left:2364.5px;top:352px;width:551.0999999999999px;height:71.80000000000001px;background:#2a2f37;border-radius:20px;"></div>
<div class="a" style="left:2367.6px;top:356px;width:270.0px;height:63.80000000000001px;background:#0b0e11;border-radius:17px;"></div>
<svg class="a" style="left:2387px;top:373px;" width="34" height="32" viewBox="0 0 34 32" fill="none" stroke="#ffffff" stroke-width="2.3" stroke-linecap="round" stroke-linejoin="round"><circle cx="4.4" cy="4.7" r="3.6" fill="#fff" stroke="none"/><circle cx="21.2" cy="25.8" r="3.6" fill="#fff" stroke="none"/><path d="M4.4 4.7Q9 8 9.5 15Q10 24 21.2 25.8"/><path d="M16.3 1.3L29.5 9L23.5 11.7L27.2 19.5"/><path d="M16.3 1.3L16.3 15.5L23.5 11.7"/></svg>
<div class="t" style="left:2484.00px;top:374.64px;font-size:25px;color:#ffffff;font-weight:700;letter-spacing:-0.250px;">Actions</div>
<svg class="a" style="left:2655px;top:372px;" width="34" height="34" viewBox="0 0 34 34" fill="none" stroke="#95a1ac" stroke-width="2.4" stroke-linecap="round" stroke-linejoin="round"><path d="M9.5 3H24.5L31 11.5L17 30.5L3 11.5Z"/><path d="M3 11.5H31"/><path d="M13 3L10.8 11.5L17 30.5L23.2 11.5L21 3"/></svg>
<div class="t" style="left:2725.00px;top:374.84px;font-size:25px;color:#95a1ac;letter-spacing:0.133px;-webkit-text-stroke:0.35px #95a1ac;">Action Blocks</div>
<div class="a" style="left:2364.4px;top:456.3px;width:551.1999999999998px;height:98.69999999999999px;background:#1f2328;border-radius:17px;border:2.5px solid #30363e;box-sizing:border-box;"></div>
<svg class="a" style="left:2382px;top:493px;" width="28" height="26" viewBox="0 0 28 26" fill="none" stroke="#ffffff" stroke-width="2" stroke-linecap="round" stroke-linejoin="round"><g fill="#fff"><rect x="2" y="2" width="8.9" height="10" rx="2.8"/><rect x="17.1" y="2" width="8.7" height="10" rx="2.8"/><rect x="17.1" y="14.1" width="8.7" height="9.7" rx="2.8"/></g><path d="M10 7H18M14.4 7V14.5Q14.4 18.5 18 18.5"/></svg>
<div class="t" style="left:2426.41px;top:492.89px;font-size:26px;color:#ffffff;transform:scaleX(0.918444760550023);transform-origin:0 0;-webkit-text-stroke:0.9px #ffffff;">Action Flow Editor</div>
<svg class="a" style="left:2629.00px;top:493.50px;" width="25" height="25" viewBox="0 0 24 24" fill="none" stroke="#57636c" stroke-width="1.824" stroke-linecap="round" stroke-linejoin="round"><circle cx="12" cy="12" r="10.5"/><path d="M12 16.5v-5"/><path d="M12 7.5h.01"/></svg>
<div class="a" style="left:2770px;top:474px;width:128px;height:63.700000000000045px;background:#6bcfbc;border-radius:16px;"></div>
<div class="t" style="left:2809.70px;top:492.14px;font-size:27px;color:#ffffff;font-weight:700;letter-spacing:-0.700px;">Edit</div>
<div class="t" style="left:2365.60px;top:596.34px;font-size:31.5px;color:#e38c5c;font-weight:700;letter-spacing:-0.425px;">Define Action</div>
<div class="a" style="left:2852px;top:580px;width:63.59999999999991px;height:63.5px;background:#1f2328;border-radius:16px;border:2.5px solid #30363e;box-sizing:border-box;"></div>
<svg class="a" style="left:2866px;top:594px;" width="36" height="36" viewBox="0 0 36 36" fill="none" stroke="#ffffff" stroke-width="2.6" stroke-linecap="round" stroke-linejoin="round"><path d="M17 3H10Q3 3 3 10V26Q3 33 10 33H23.5Q30.5 33 30.5 26V16"/><path d="M26 2V14M20 8H32"/><path d="M9.5 12.5H14M9.5 20H23.5M9.5 27H23.5"/></svg>
<div class="a" style="left:2364.4px;top:660.5px;width:551.1999999999998px;height:63.200000000000045px;background:#1f2328;border-radius:16px;border:2.5px solid #30363e;box-sizing:border-box;"></div>
<div class="t" style="left:2391.45px;top:681.03px;font-size:23px;color:#ffffff;letter-spacing:0.160px;-webkit-text-stroke:0.9px #ffffff;">On Tap</div>
<svg class="a" style="left:2476.80px;top:680.00px;" width="24" height="24" viewBox="0 0 24 24" fill="none" stroke="#57636c" stroke-width="1.900" stroke-linecap="round" stroke-linejoin="round"><circle cx="12" cy="12" r="10.5"/><path d="M12 16.5v-5"/><path d="M12 7.5h.01"/></svg>
<svg class="a" style="left:2853px;top:678px;" width="39" height="30" viewBox="0 0 39 30" fill="none" stroke="#95a1ac" stroke-width="3.2" stroke-linecap="round" stroke-linejoin="round"><path d="M4.2 7L19.5 22.5L34.8 7"/></svg>
<div class="t" style="left:2364.40px;top:759.72px;font-size:27.5px;color:#95a1ac;letter-spacing:-0.514px;-webkit-text-stroke:0.35px #95a1ac;">Action 1</div>
<svg class="a" style="left:2826px;top:757px;" width="34" height="32" viewBox="0 0 34 32" fill="none" stroke="#95a1ac" stroke-width="2.4" stroke-linecap="round" stroke-linejoin="round"><path d="M4 28L4.5 22.5L21.5 5.5Q24.5 2.5 27.5 5.5Q30.5 8.5 27.5 11.5L10.5 28.5Z"/><path d="M17 28.5H30"/></svg>
<div class="a" style="left:2890.7px;top:762px;width:6.900000000000091px;height:6.899999999999977px;background:#95a1ac;border-radius:4px;"></div>
<div class="a" style="left:2890.7px;top:770.5px;width:6.900000000000091px;height:6.899999999999977px;background:#95a1ac;border-radius:4px;"></div>
<div class="a" style="left:2890.7px;top:779px;width:6.900000000000091px;height:6.899999999999977px;background:#95a1ac;border-radius:4px;"></div>
<div class="a" style="left:2364.4px;top:808px;width:551.1999999999998px;height:63.39999999999998px;background:#1f2328;border-radius:16px;border:2.5px solid #30363e;box-sizing:border-box;"></div>
<div class="t" style="left:2398.60px;top:828.74px;font-size:23.7px;color:#ffffff;font-weight:700;letter-spacing:-0.385px;">Clear Text Fields/Pin Codes</div>
<svg class="a" style="left:2861px;top:826px;" width="38" height="30" viewBox="0 0 38 30" fill="none" stroke="#95a1ac" stroke-width="3.2" stroke-linecap="round" stroke-linejoin="round"><path d="M4 7.5L19 23L34 7.5"/></svg>
<div class="t" style="left:2364.40px;top:894.84px;font-size:25px;color:#95a1ac;letter-spacing:-0.025px;-webkit-text-stroke:0.35px #95a1ac;">Select Text Fields/Pin Codes to Clear</div>
<div class="a" style="left:2366px;top:959px;width:35.59999999999991px;height:35.60000000000002px;background:#4b39ef;border-radius:5px;"></div>
<svg class="a" style="left:2366px;top:959px;" width="36" height="36" viewBox="0 0 36 36" fill="none" stroke="#ffffff" stroke-width="3.4" stroke-linecap="round" stroke-linejoin="round"><path d="M7.5 18.5L14.5 25L29 10.5"/></svg>
<div class="t" style="left:2417.20px;top:962.02px;font-size:27.5px;color:#87919a;letter-spacing:-0.070px;-webkit-text-stroke:1.0px #87919a;">TextField_1</div>
<div class="a" style="left:2804px;top:1523px;width:96px;height:96px;background:#4838e6;border-radius:48px;box-shadow:0 4px 24px rgba(0,0,0,.3);"></div>
<svg class="a" style="left:2828px;top:1544px;" width="48" height="54" viewBox="0 0 48 54" fill="none" stroke="#4838e6" stroke-width="2.6" stroke-linecap="round" stroke-linejoin="round"><path d="M7.5 3H40Q45 3 45 7.5V51L33 46H7.5Q3 46 3 41V7.5Q3 3 7.5 3Z" fill="#fff" stroke="none"/><path d="M9.5 34Q24 43 38.5 34"/></svg>
<div class="a" style="left:1838px;top:14px;width:122px;height:70px;border-radius:35px;background:linear-gradient(#14181b,#14181b) padding-box,linear-gradient(50deg,#f0956a 12%,#c58aa6 38%,#6a4ff0 62%,#5a44f2 100%) border-box;border:3px solid transparent;box-sizing:border-box;box-shadow:0 0 4px rgba(120,90,240,.35)"></div>
<div class="a" style="left:1851px;top:29px;width:40px;height:40px;background:#6acfbe;border-radius:20px;"></div>
<svg class="a" style="left:1851px;top:29px;" width="40" height="40" viewBox="0 0 40 40" fill="none" stroke="#ffffff" stroke-width="3.2" stroke-linecap="round" stroke-linejoin="round"><path d="M10.5 21.5L17 28L30 14"/></svg>
<svg class="a" style="left:1906px;top:32px;" width="34" height="33" viewBox="0 0 34 33" fill="none" stroke="#ffffff" stroke-width="2" stroke-linecap="round" stroke-linejoin="round"><path d="M9.5 2.5H29.5L25.5 11.5H5.5Z"/><path d="M16 2.5L19.5 11.5"/><path d="M5.5 11.5L8 16H15"/><path d="M8 16L3.5 23.5L4 26H13"/><path d="M8 16L11 26"/><path d="M4 26L7 31L11.5 26"/><path d="M16 29L24 20.5L26 22.5L18 31Z"/><path d="M26 15.5V18M29.5 19H27M28.5 16.5L27 18"/></svg>
<div class="a" style="left:1988px;top:17px;width:124px;height:63px;border-radius:32px;border:2.5px solid #30363d;box-sizing:border-box;"></div>
<div class="a" style="left:1998px;top:28px;width:42px;height:42px;background:#6acfbe;border-radius:21px;"></div>
<svg class="a" style="left:1998px;top:28px;" width="42" height="42" viewBox="0 0 42 42" fill="none" stroke="#ffffff" stroke-width="3.2" stroke-linecap="round" stroke-linejoin="round"><path d="M10.5 22.5L17.5 29.5L32.5 14"/></svg>
<svg class="a" style="left:2056px;top:33px;" width="38" height="35" viewBox="0 0 38 35" fill="none" stroke="#ffffff" stroke-width="2.4" stroke-linecap="round" stroke-linejoin="round"><path d="M19 2.5C27.5 2.5 32 7 32 12.5C32 18 27.5 22.5 19 22.5C17 22.5 15 22.2 13.5 21.7L5 25.5L7 19.5C4 17.5 3 15 3 12.5C3 7 9.5 2.5 19 2.5Z"/><path d="M11 10H26M11 16H21"/><path d="M33 17.5C35 19 35.5 21 35 23.5L35 31L30.5 28.5C27 29.5 23 29 20.5 27"/></svg>
<div class="a" style="left:2128px;top:17px;width:122px;height:63px;border-radius:32px;border:2.5px solid #30363d;box-sizing:border-box;"></div>
<div class="a" style="left:2138px;top:28px;width:42px;height:42px;background:#4b39ef;border-radius:21px;"></div>
<div class="t" style="left:2151.50px;top:35.64px;font-size:27px;color:#ffffff;font-weight:700;">2</div>
<svg class="a" style="left:2192px;top:36px;" width="40" height="32" viewBox="0 0 40 32" fill="none" stroke="#ffffff" stroke-width="2.6" stroke-linecap="round" stroke-linejoin="round"><path d="M24.5 2L12 17H22L18 30L31.5 13.5H21.5Z"/><path d="M4 9H12M2 16H9M4 23H12"/></svg>
<div class="a" style="left:2266px;top:17px;width:169px;height:63px;border-radius:32px;border:2.5px solid #30363d;box-sizing:border-box;"></div>
<div class="a" style="left:2276px;top:28px;width:42px;height:42px;background:#f2a54e;border-radius:21px;"></div>
<div class="t" style="left:2289.50px;top:35.64px;font-size:27px;color:#ffffff;font-weight:700;">4</div>
<div class="a" style="left:2326px;top:28px;width:42px;height:42px;background:#d04a42;border-radius:21px;"></div>
<div class="t" style="left:2339.50px;top:35.64px;font-size:27px;color:#ffffff;font-weight:700;">1</div>
<svg class="a" style="left:2390px;top:26px;" width="35" height="29" viewBox="0 0 35 29" fill="none" stroke="#ffffff" stroke-width="6" stroke-linecap="round" stroke-linejoin="round"><path d="M7.5 8.5A19.5 19.5 0 0 1 24.4 18.25" stroke-linecap="butt"/></svg>
<div class="a" style="left:2452px;top:13px;width:72px;height:71px;border-radius:16px;border:2.5px solid #30363d;box-sizing:border-box;"></div>
<div class="a" style="left:2540px;top:13px;width:72px;height:71px;border-radius:16px;border:2.5px solid #30363d;box-sizing:border-box;"></div>
<div class="a" style="left:2628px;top:13px;width:72px;height:71px;border-radius:16px;border:2.5px solid #30363d;box-sizing:border-box;"></div>
<svg class="a" style="left:2452px;top:13px;" width="72" height="71" viewBox="0 0 72 71" fill="none" stroke="#ffffff" stroke-width="2.8" stroke-linecap="round" stroke-linejoin="round"><path d="M21 19V40Q21 47.8 29 47.8H40"/><path d="M21 27.8H40"/><circle cx="45.7" cy="27.8" r="5.3"/><circle cx="45.7" cy="47.8" r="5.3"/></svg>
<svg class="a" style="left:2540px;top:13px;" width="71" height="71" viewBox="0 0 71 71" fill="none" stroke="#ffffff" stroke-width="2.8" stroke-linecap="round" stroke-linejoin="round"><path d="M27.5 32L20.5 38.5L27.5 45"/><path d="M44.5 32L51.5 38.5L44.5 45"/><path d="M38.5 28.5L32.5 49.5"/></svg>
<svg class="a" style="left:2628px;top:13px;" width="71" height="71" viewBox="0 0 71 71" fill="none" stroke="#ffffff" stroke-width="2.8" stroke-linecap="round" stroke-linejoin="round"><path d="M34 21H21Q18.5 21 18.5 23.5V51.5Q18.5 54 21 54H50Q52.5 54 52.5 51.5V38"/><path d="M35 38.5L48 25.5"/><path d="M41 20L53.5 19.5L53 32Z" fill="#fff"/></svg>
<div class="a" style="left:2716px;top:13px;width:72px;height:71px;background:#5e4434;border-radius:16px;border:3px solid #e59570;box-sizing:border-box;"></div>
<svg class="a" style="left:2733.00px;top:29.50px;" width="38" height="38" viewBox="0 0 24 24" fill="none" stroke="#ffffff" stroke-width="1.895" stroke-linecap="round" stroke-linejoin="round"><path d="M2 12s3.6-7 10-7 10 7 10 7-3.6 7-10 7-10-7-10-7Z"/><circle cx="12" cy="12" r="3"/></svg>
<div class="a" style="left:2804px;top:13px;width:120px;height:72px;background:#4b39ef;border-radius:16px;"></div>
<div class="a" style="left:2872px;top:19px;width:3px;height:59px;background:#1e1a55;"></div>
<svg class="a" style="left:2820px;top:26px;" width="46" height="46" viewBox="0 0 46 46" fill="none" stroke="#ffffff" stroke-width="1.2" stroke-linecap="round" stroke-linejoin="round"><path d="M23 6H33L27.5 20.5H33.5L15.5 40.5L20 25H14Z" fill="#fff"/></svg>
<svg class="a" style="left:2884px;top:33px;" width="30" height="30" viewBox="0 0 30 30" fill="none" stroke="#ffffff" stroke-width="3.8" stroke-linecap="round" stroke-linejoin="round"><path d="M6.5 11.5L15 21L23.5 11.5"/></svg>
</body></html>
